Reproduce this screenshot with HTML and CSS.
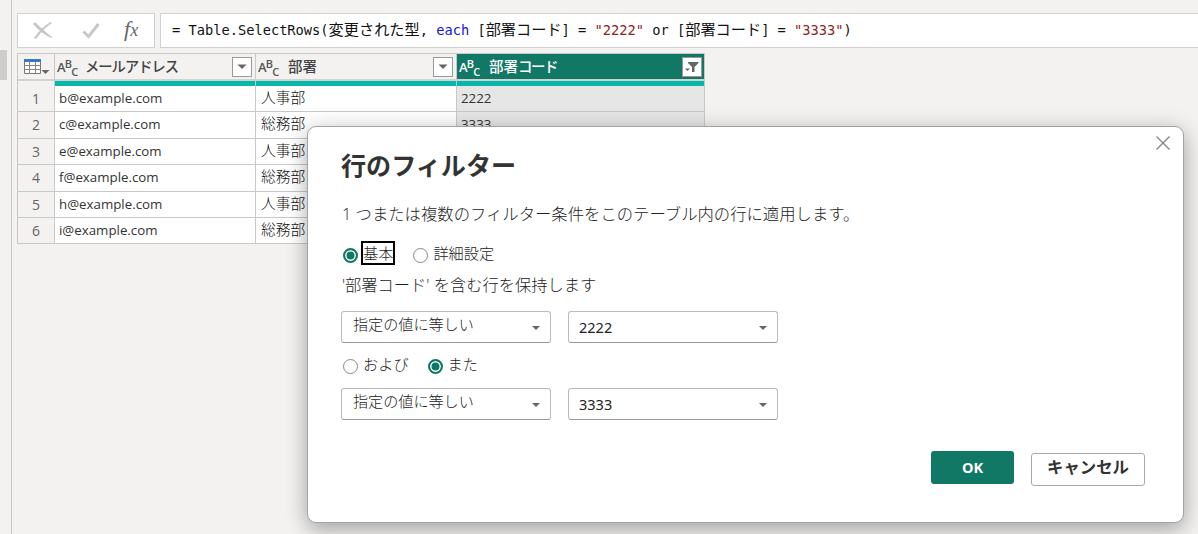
FILE: index.html
```html
<!DOCTYPE html>
<html lang="ja">
<head>
<meta charset="utf-8" />
<title>行のフィルター</title>
<link rel="stylesheet" href="styles.css">
</head>

<body>
<div class="app">
	<div class="side"><div class="handle"></div></div>
	<div class="main">
		<div class="formula">
			<div class="tools">
				<svg class="t-x" width="20" height="18" viewBox="0 0 20 18"><path d="M0 2C2 0 3 1 4 2C9 7 14 11 19.500 15.500L18 16C12 13 6 9 0 2zM17.500 0L19 1C12 6 8 10 4 16C3 17 2 17 1 16C5 10 11 4 17.500 0z" fill="#c6c6c6"/></svg>
				<svg class="t-check" width="18" height="18" viewBox="0 0 18 18"><path d="M1.500 9.500L6.500 14.500L16.500 2" fill="none" stroke="#c8c8c8" stroke-width="3"/></svg>
				<span class="fx"><i>f</i><i class="fx-x">x</i></span>
			</div>
			<div class="code">= Table.SelectRows(<b>変更された型</b>, <span class="kw">each</span> [<b>部署コード</b>] = <span class="str">"2222"</span> or [<b>部署コード</b>] = <span class="str">"3333"</span>)</div>
		</div>
		<div class="table">
			<div class="head corner">
				<svg width="27" height="18" viewBox="0 0 27 18">
					<path d="M.5 1.500h16v14H.5z" fill="#fff" stroke="#777"/>
					<path d="M0 1h17v3H0z" fill="#3b78bd"/>
					<path d="M.5 7.500h16M.5 11.500h16M5.500 4v12M11.500 4v12" fill="none" stroke="#858585"/>
					<path d="M17.500 12h8l-4 4z" fill="#666"/>
				</svg>
			</div>
			<div class="head">
				<span class="abc">A<sup>B</sup><sub>C</sub></span><span class="name kana">メールアドレス</span>
				<span class="drop"><svg width="10" height="6" viewBox="0 0 10 6"><path d="M.5.500h9L5 5z" fill="#666"/></svg></span>
			</div>
			<div class="head">
				<span class="abc">A<sup>B</sup><sub>C</sub></span><span class="name">部署</span>
				<span class="drop"><svg width="10" height="6" viewBox="0 0 10 6"><path d="M.5.500h9L5 5z" fill="#666"/></svg></span>
			</div>
			<div class="head current">
				<span class="abc">A<sup>B</sup><sub>C</sub></span><span class="name">部署<span class="tight">コード</span></span>
				<span class="drop"><svg width="14" height="12" viewBox="0 0 14 12"><path d="M3 1h10.500v1L9.500 6v5h-2.500V6L3 2zM0 7.500h5L2.500 10z" fill="#666"/></svg></span>
			</div>

			<div class="bar none"></div><div class="bar"></div><div class="bar"></div><div class="bar"></div>

			<div class="num">1</div><div class="cell">b@example.com</div><div class="cell jp">人事部</div><div class="cell sel">2222</div>
			<div class="num">2</div><div class="cell">c@example.com</div><div class="cell jp">総務部</div><div class="cell sel">3333</div>
			<div class="num">3</div><div class="cell">e@example.com</div><div class="cell jp">人事部</div><div class="cell sel"></div>
			<div class="num">4</div><div class="cell">f@example.com</div><div class="cell jp">総務部</div><div class="cell sel"></div>
			<div class="num">5</div><div class="cell">h@example.com</div><div class="cell jp">人事部</div><div class="cell sel"></div>
			<div class="num">6</div><div class="cell">i@example.com</div><div class="cell jp">総務部</div><div class="cell sel"></div>
		</div>
	</div>
</div>

<div class="dialog">
	<svg class="close" width="16" height="16" viewBox="0 0 16 16"><path d="M1.500 1.500l13 13M14.500 1.500l-13 13" fill="none" stroke="#858585" stroke-width="1.400"/></svg>
	<h1>行のフィルター</h1>
	<p class="desc">1 つまたは複数のフィルター条件をこのテーブル内の行に適用します。</p>
	<div class="radios">
		<span class="radio on"></span><span class="label focus">基本</span>
		<span class="radio second"></span><span class="label">詳細設定</span>
	</div>
	<p class="keep">'部署コード' を含む行を保持します</p>
	<div class="selects">
		<div class="select">指定の値に等しい<i class="arrow"></i></div>
		<div class="select value">2222<i class="arrow"></i></div>
	</div>
	<div class="radios andor">
		<span class="radio"></span><span class="label">および</span>
		<span class="radio on second"></span><span class="label">また</span>
	</div>
	<div class="selects">
		<div class="select">指定の値に等しい<i class="arrow"></i></div>
		<div class="select value">3333<i class="arrow"></i></div>
	</div>
	<div class="buttons">
		<div class="btn ok">OK</div>
		<div class="btn cancel">キャンセル</div>
	</div>
</div>
</body>
</html>
```

FILE: styles.css
```css
*{ padding:0; margin:0; box-sizing:border-box;}
body{
  width:1198px;
  height:534px;
  overflow:hidden;
  background:#f3f2f1;
  color:#333;
  font-family:"Open Sans","Noto Sans CJK JP",sans-serif;
  position:relative;
}
.app{ display:flex; height:534px;}
.side{ width:12px; border-right:1px solid #c8c8c8; padding-top:50px;}
.handle{ width:7px; height:30px; background:#cfcdcc;}
.main{ flex:1; padding:13px 0 0 5px;}

/* formula bar */
.formula{ display:flex; gap:5px; height:35px;}
.tools{ width:138px; border:1px solid #d0d0d0; background:#fff; display:flex; align-items:center; padding-left:15px;}
.t-check{ margin-left:29px;}
.fx{ margin-left:24px; font:22px/28px "Liberation Serif",serif; color:#666; white-space:nowrap; padding-bottom:3px;}
.fx-x{ font-size:18px;}
.code{
  flex:1;
  border:1px solid #d0d0d0;
  border-right:0;
  background:#fff;
  padding-left:11px;
  font:13.7px/33px "DejaVu Sans Mono","Noto Sans CJK JP",monospace;
  color:#111;
  white-space:pre;
}
.code b{ font-weight:normal; font-size:15.200px; line-height:20px;}
.kw{ color:#1414e6;}
.str{ color:#8f2323;}

/* table */
.table{
  display:grid;
  grid-template-columns:37px 201px 201px 248px;
  grid-template-rows:25px 7px 26px 27px 26px 27px 26px 26px;
  width:688px;
  margin-top:5px;
  border-top:1px solid #c8c8c8;
  border-left:1px solid #c8c8c8;
}
.head{ border-right:1px solid #c8c8c8; display:flex; align-items:center; padding:1px 2px 0 2px; font-size:15px; color:#444;}
.head:nth-child(2){ padding-right:3px;}
.head:nth-child(3){ padding-right:3px;}
.corner{ padding-left:6px;}
.current{ background:#117865; color:#fff;}
.abc{ width:30px; font:600 13px/24px "Open Sans",sans-serif; color:#555; white-space:nowrap; letter-spacing:-.8px;}
.abc sup,.abc sub{ font-size:11px; line-height:0; vertical-align:baseline; position:relative;}
.abc sup{ top:-4px;}
.abc sub{ top:4px;}
.current .abc{ color:#fff;}
.name{ flex:1; line-height:24px; font-weight:500; font-size:14.500px;}
.kana{ font-size:14.300px; letter-spacing:-1px; margin-left:-2px;}
.tight{ letter-spacing:-1.500px;}
.drop{ width:20px; height:20px; border:1px solid #999; background:#fff; display:flex; align-items:center; justify-content:center;}
.bar{ background:#01b8aa; border-right:1px solid #c8c8c8; border-top:2px solid #d8d0cf;}
.none{ background:#f3f2f1;}
.num,.cell{ border-right:1px solid #c8c8c8; border-bottom:1px solid #c8c8c8; line-height:25px; font-size:13.300px;}
.num{ text-align:center; color:#666; font-size:14px;}
.cell{ background:#fff; padding-left:4px;}
.jp{ font-size:14.700px; line-height:23px; font-weight:300; color:#111; padding-left:5px;}
.sel{ background:#e6e6e6;}

/* dialog */
.dialog{
  position:absolute;
  left:307px;
  top:126px;
  width:877px;
  height:397px;
  border:1px solid #a3a3a3;
  border-radius:9px;
  background:#fff;
  box-shadow:0 8px 20px rgba(0,0,0,.22),0 2px 24px rgba(0,0,0,.14);
  padding:20px 38px 0 33px;
}
.close{ position:absolute; right:12px; top:8px;}
.dialog h1{ font-size:25.100px; line-height:36px; height:36px;}
.desc,.keep{ font-size:16.350px; line-height:24px; font-weight:300; color:#222; white-space:nowrap; margin-left:1px;}
.desc{ margin-top:19px;}
.radios{ display:flex; align-items:center; height:24px; margin-top:15px;}
.radio{ width:15px; height:15px; border:1px solid #888; border-radius:50%; margin:4px 5px 0 2px;}
.radio.on{ border:2px solid #117865; background:#117865; box-shadow:inset 0 0 0 1.500px #fff;}
.radio.second{ margin-left:19px;}
.label{ font-size:15.200px; line-height:20px; font-weight:300; color:#222;}
.focus{ outline:2px solid #000; margin-right:1px;}
.keep{ margin-top:8px; font-size:16.250px;}
.selects{ display:flex; gap:17px; margin-top:14px;}
.select{
  width:210px;
  height:32px;
  border:1px solid #bbb;
  border-bottom-color:#999;
  border-radius:3px;
  padding:0 10px 0 11px;
  display:flex;
  justify-content:space-between;
  font-size:15.100px;
  line-height:25px;
  font-weight:300;
  color:#222;
}
.value{ font-family:"Noto Sans",sans-serif; font-size:14.500px; line-height:31px; font-weight:400; padding-left:10px;}
.arrow{ border:4px solid transparent; border-top-color:#666; border-bottom:0; height:0; margin-top:14px;}
.andor{ margin-top:9px;}
.andor + .selects{ margin-top:12px;}
.buttons{ display:flex; justify-content:flex-end; gap:17px; margin-top:31px;}
.btn{ font-weight:bold; font-size:14.500px; text-align:center; border-radius:3px;}
.ok{ width:83px; height:33px; line-height:33px; background:#117865; color:#fff;}
.cancel{ width:114px; height:33px; line-height:26px; margin-top:2px; border:1px solid #aaa; font-size:16.400px;}
```
